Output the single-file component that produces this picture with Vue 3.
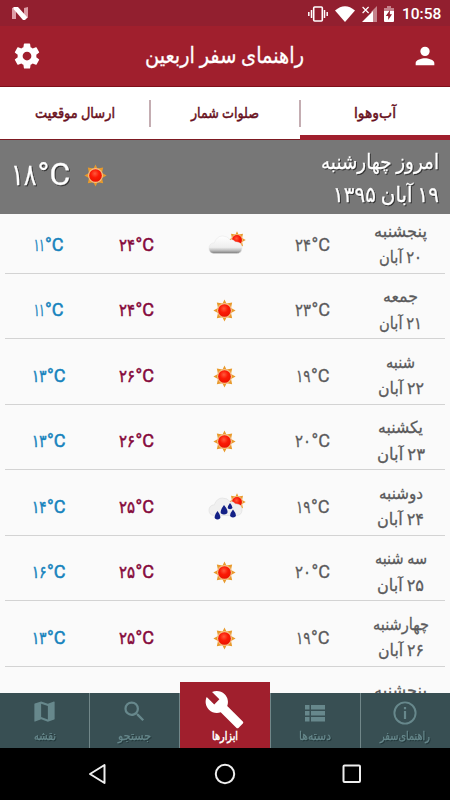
<script setup>
import { h } from 'vue'

// Single line of text fitted to a fixed width
const Txt = (p) =>
  h('svg', { class: 'txt', width: p.w, height: p.s, viewBox: `0 0 ${p.w} ${p.s}` }, [
    h('text', {
      x: p.w,
      y: p.s * 0.8,
      'font-size': p.s,
      direction: 'rtl',
      textLength: p.w,
      lengthAdjust: 'spacingAndGlyphs',
    }, p.t),
  ])
Txt.props = { t: String, w: Number, s: Number }

// Temperature: Persian digits followed by the unit, sized relative to a 17.5px line
const Temp = (p) => {
  const dw = p.v === '۱۱' ? 11 : p.v[0] === '۱' ? 15 : 16.5
  const w = dw + 18.5
  const k = p.s / 17.5
  return h('svg', { class: 'txt', width: w * k, height: p.s, viewBox: `0 0 ${w} 17.5` }, [
    h('text', { x: 0, y: 14, 'font-size': 17, textLength: dw - 0.5, lengthAdjust: 'spacingAndGlyphs' }, p.v),
    h('text', { x: dw, y: 14, 'font-size': 17.5, textLength: 18.5, lengthAdjust: 'spacingAndGlyphs' }, '°C'),
  ])
}
Temp.props = { v: String, s: { type: Number, default: 17.5 } }

const tabs = [
  { t: 'آب‌وهوا', w: 42, on: true },
  { t: 'صلوات شمار', w: 68 },
  { t: 'ارسال موقعیت', w: 80 },
]
const days = [
  { d: 'پنجشنبه', dw: 53, n: '۲۰ آبان', nw: 43, now: '۲۴', hi: '۲۴', lo: '۱۱', icon: 'cloud' },
  { d: 'جمعه', dw: 35, n: '۲۱ آبان', nw: 43, now: '۲۳', hi: '۲۴', lo: '۱۱', icon: 'sun' },
  { d: 'شنبه', dw: 29, n: '۲۲ آبان', nw: 46, now: '۱۹', hi: '۲۶', lo: '۱۳', icon: 'sun' },
  { d: 'یکشنبه', dw: 45, n: '۲۳ آبان', nw: 48, now: '۲۰', hi: '۲۶', lo: '۱۳', icon: 'sun' },
  { d: 'دوشنبه', dw: 44, n: '۲۴ آبان', nw: 47, now: '۱۹', hi: '۲۵', lo: '۱۴', icon: 'rain' },
  { d: 'سه شنبه', dw: 52, n: '۲۵ آبان', nw: 47, now: '۲۰', hi: '۲۵', lo: '۱۶', icon: 'sun' },
  { d: 'چهارشنبه', dw: 56, n: '۲۶ آبان', nw: 46, now: '۱۹', hi: '۲۵', lo: '۱۳', icon: 'sun' },
  { d: 'پنجشنبه', dw: 53 },
]
const nav = [
  { t: 'راهنمای‌سفر', w: 50, icon: 'info' },
  { t: 'دسته‌ها', w: 32, icon: 'list' },
  { t: 'ابزارها', w: 26, icon: 'tool', on: true },
  { t: 'جستجو', w: 33, icon: 'search' },
  { t: 'نقشه', w: 22, icon: 'map' },
]
</script>

<template>
  <div class="screen">
    <svg class="defs" width="0" height="0">
      <defs>
        <radialGradient id="core" cx=".45" cy=".35" r=".65">
          <stop offset="0" stop-color="#ff5a3c" /><stop offset=".5" stop-color="#fb1a05" /><stop offset="1" stop-color="#e81400" />
        </radialGradient>
        <linearGradient id="puff" x1="0" y1="0" x2="0" y2="1">
          <stop offset="0" stop-color="#ffffff" /><stop offset=".65" stop-color="#eeeeee" /><stop offset=".85" stop-color="#b5b5b5" /><stop offset="1" stop-color="#777777" />
        </linearGradient>
        <symbol id="sun" viewBox="0 0 24 24">
          <path fill="#e89a2c" d="M12 .4l2 4.400 6-1.100-1.200 5.600 4.800 2.700-4.800 2.700L20 20.200l-5.800-1.100L12 23.600l-2.200-4.500L4 20.200l1.200-5.500L.4 12l4.800-2.700L4 3.700l6 1.100z" />
          <circle cx="12" cy="12" r="7.800" fill="#f6bd83" />
          <circle cx="12" cy="12" r="6.600" fill="url(#core)" />
        </symbol>
        <symbol id="puffy" viewBox="0 0 36 20">
          <path fill="url(#puff)" stroke="#e6e6e6" stroke-width=".5" d="M6 19Q1 18.500 1 13.500Q1.200 8.500 6.500 8Q9 1 15 1Q20 1 23 5Q26 4 28 7Q35 7 35 13.500Q34.500 19 29 19Z" />
        </symbol>
        <symbol id="puffy-light" viewBox="0 0 36 20">
          <path fill="#f0f0f0" stroke="#dcdcdc" stroke-width=".6" d="M6 19Q1 18.500 1 13.500Q1.200 8.500 6.500 8Q9 1 15 1Q20 1 23 5Q26 4 28 7Q35 7 35 13.500Q34.500 19 29 19Z" />
        </symbol>
      </defs>
    </svg>

    <div class="status">
      <svg class="nlogo" width="16" height="13" viewBox="0 0 16 13">
        <path fill="#dc9da6" d="M0 1l4-1v12H0zM12 1l4-1v10.500l-4 1.500z" /><path fill="#fff" d="M1.500 0H6l9.500 10.500-2.500 2.500h-2L1.500 2z" />
      </svg>
      <div class="signals">
        <svg width="20" height="16" viewBox="0 0 20 16" fill="none" stroke="#fff">
          <rect x="5.700" y="1" width="8.600" height="14" rx="1" stroke-width="1.600" />
          <path stroke-width="1.500" d="M3.500 4v8M16.500 4v8M.8 6v4M19.200 6v4" />
        </svg>
        <svg width="20" height="16" viewBox="0 0 20 16"><path fill="#fff" d="M0 4.500Q10-4 20 4.500L10 16z" /></svg>
        <svg width="15" height="16" viewBox="0 0 15 16">
          <path fill="#c5838c" d="M9.500 5.500L15 0v16H9.500z" /><path fill="#fff" d="M0 16L11 5v11z" /><path stroke="#fff" stroke-width="1.200" d="M.6 1l6 6M6.600 1l-6 6" />
        </svg>
        <svg width="10" height="16" viewBox="0 0 10 16">
          <path fill="#c5838c" d="M3 0h4v2h3v5H0V2h3z" /><path fill="#fff" d="M0 5h10v10q0 1-1 1H1q-1 0-1-1z" /><path fill="#921f2f" d="M6 4L1.800 10h2.400v4L8 8.300H5.800z" />
        </svg>
      </div>
      <span class="clock">10:58</span>
    </div>

    <header class="bar">
      <svg width="30" height="30" viewBox="0 0 24 24" fill="#fff"><path d="M19.430 12.980c.04-.32.070-.64.070-.98s-.03-.66-.07-.98l2.110-1.650c.19-.15.24-.42.12-.64l-2-3.460c-.12-.22-.39-.3-.61-.22l-2.490 1c-.52-.4-1.080-.73-1.690-.98l-.38-2.650A.488.488 0 0 0 14 2h-4c-.25 0-.46.18-.49.42l-.38 2.650c-.61.25-1.170.59-1.690.98l-2.490-1c-.23-.09-.49 0-.61.22l-2 3.460c-.13.22-.07.49.12.64l2.110 1.650c-.04.32-.07.65-.07.98s.03.66.07.98l-2.110 1.650c-.19.15-.24.42-.12.64l2 3.460c.12.22.39.3.61.22l2.490-1c.52.4 1.080.73 1.690.98l.38 2.650c.03.24.24.42.49.42h4c.25 0 .46-.18.49-.42l.38-2.650c.61-.25 1.170-.59 1.690-.98l2.490 1c.23.09.49 0 .61-.22l2-3.460c.12-.22.070-.49-.12-.64zM12 15.500a3.500 3.500 0 1 1 0-7 3.500 3.500 0 0 1 0 7z" /></svg>
      <Txt class="title" t="راهنمای سفر اربعین" :w="159" :s="22" />
      <svg width="28" height="28" viewBox="0 0 24 24" fill="#fff"><path d="M12 12a4 4 0 1 0 0-8 4 4 0 0 0 0 8zm0 2c-2.670 0-8 1.340-8 4v2h16v-2c0-2.660-5.330-4-8-4z" /></svg>
    </header>

    <nav class="tabs">
      <div v-for="t in tabs" :key="t.t" class="tab" :class="{ on: t.on }"><Txt :t="t.t" :w="t.w" :s="15" /></div>
    </nav>

    <section class="today">
      <div class="date">
        <Txt t="امروز چهارشنبه" :w="118" :s="21" />
        <Txt t="۱۹ آبان ۱۳۹۵" :w="106" :s="21" />
      </div>
      <svg class="sun" width="23" height="23"><use href="#sun" /></svg>
      <Temp class="big" v="۱۸" :s="31" />
    </section>

    <main class="list">
      <div v-for="(r, i) in days" :key="i" class="row">
        <div class="day"><Txt :t="r.d" :w="r.dw" :s="16.5" /><Txt v-if="r.n" :t="r.n" :w="r.nw" :s="16.5" /></div>
        <template v-if="r.n">
          <Temp :v="r.now" />
          <svg v-if="r.icon === 'sun'" width="23" height="23"><use href="#sun" /></svg>
          <svg v-else class="cloud" width="38" height="30" viewBox="0 0 38 30">
            <use href="#sun" x="20" y="1" width="18" height="18" />
            <use :href="r.icon === 'rain' ? '#puffy-light' : '#puffy'" x="0" y="5" width="35" height="19.500" />
            <path v-if="r.icon === 'rain'" fill="#132086" d="M16 13q5 6 3 8.500-3 2-6 0-1.500-2.500 3-8.500zM22 11q3.500 4 2 5.500-2 1.500-4 0-1-1.500 2-5.500zM9.500 19q4 5 2.500 7.500-2.500 2-5 0-1.500-2.500 2.500-7.500zM25 17.500q4 5 2.500 7-2.500 2-5 0-1.500-2 2.500-7z" />
          </svg>
          <Temp class="hi" :v="r.hi" />
          <Temp class="lo" :v="r.lo" />
        </template>
      </div>
    </main>

    <nav class="bottom">
      <div v-for="n in nav" :key="n.icon" class="item" :class="{ on: n.on }">
        <svg v-if="n.icon === 'info'" width="24" height="24" viewBox="0 0 24 24"><circle cx="12" cy="12" r="10.600" fill="none" stroke="currentColor" stroke-width="1.900" /><path fill="currentColor" d="M10.900 6h2.200v2.200h-2.200zM10.900 10h2.200v8h-2.200z" /></svg>
        <svg v-else-if="n.icon === 'list'" width="24" height="24" viewBox="0 0 24 24"><path fill="currentColor" d="M2 4h4.500v4.600H2zM8 4h14v4.600H8zM2 10h4.500v4.600H2zM8 10h14v4.600H8zM2 16h4.500v4.600H2zM8 16h14v4.600H8z" /></svg>
        <svg v-else-if="n.icon === 'tool'" width="41" height="41" viewBox="0 0 24 24"><path fill="currentColor" d="M22.700 19l-9.100-9.100c.9-2.300.4-5-1.500-6.900-2-2-5-2.400-7.400-1.300L9 6 6 9 1.600 4.700C.4 7.100.9 10.100 2.900 12.100c1.900 1.900 4.600 2.400 6.900 1.500l9.100 9.100c.4.4 1 .4 1.400 0l2.300-2.300c.5-.4.5-1.100.1-1.400z" /></svg>
        <svg v-else-if="n.icon === 'search'" width="27" height="27" viewBox="0 0 24 24"><path fill="currentColor" d="M15.500 14h-.79l-.28-.27A6.471 6.471 0 0 0 16 9.500 6.500 6.500 0 1 0 9.500 16c1.610 0 3.090-.59 4.230-1.570l.27.28v.79l5 4.990L20.490 19l-4.990-5zm-6 0a4.500 4.500 0 1 1 0-9 4.500 4.500 0 0 1 0 9z" /></svg>
        <svg v-else width="27" height="27" viewBox="0 0 24 24"><path fill="currentColor" d="M20.500 3l-.16.03L15 5.100 9 3 3.360 4.900c-.21.070-.36.25-.36.48V20.500c0 .28.22.5.5.5l.16-.03L9 18.900l6 2.100 5.640-1.900c.21-.07.36-.25.36-.48V3.500c0-.28-.22-.5-.5-.5zM15 19l-6-2.110V5l6 2.110V19z" /></svg>
        <Txt :t="n.t" :w="n.w" :s="12" />
      </div>
    </nav>

    <footer class="system">
      <svg width="20" height="22" viewBox="0 0 20 22"><path d="M16.500 2v18L2 11z" /></svg>
      <svg width="22" height="22" viewBox="0 0 22 22"><circle cx="11" cy="11" r="9.200" /></svg>
      <svg width="20" height="20" viewBox="0 0 20 20"><rect x="1.500" y="1.500" width="16.500" height="16.500" rx="1" /></svg>
    </footer>
  </div>
</template>

<style>
body { margin: 0; background: #000; }
</style>

<style scoped>
.screen { width: 450px; height: 800px; display: flex; flex-direction: column; overflow: hidden; background: #fafafa; font-family: Roboto, "DejaVu Sans", sans-serif; }
.screen svg { display: block; flex: none; }
.screen .txt { overflow: visible; direction: ltr; fill: currentColor; stroke: currentColor; stroke-width: .3px; }
.defs { height: 0; }
.status { box-sizing: border-box; flex: none; height: 26px; background: #921f2f; display: flex; align-items: center; padding: 0 8px 0 12px; color: #fff; }
.nlogo { margin-top: 1px; }
.signals { display: flex; gap: 7px; margin-left: auto; padding-top: 1px; }
.clock { width: 40px; margin-left: 8px; font-size: 15.500px; font-weight: 500; line-height: 26px; padding-top: 2px; white-space: nowrap; }
.bar { box-sizing: border-box; flex: none; height: 61px; background: #a01f2d; border-bottom: 1px solid #7f0f1a; display: flex; align-items: center; justify-content: space-between; padding: 0 11px 0 12px; color: #fff; }
.title { margin: 0 4px 0 0; }
.tabs { box-sizing: border-box; flex: none; height: 53px; direction: rtl; display: flex; background: #fff; border-bottom: 1px solid #7d1a22; color: #681020; }
.tabs .txt { stroke-width: .5px; }
.tab { box-sizing: border-box; width: 150px; height: 53px; display: flex; align-items: center; justify-content: center; position: relative; padding-bottom: 1px; }
.tab + .tab::before { content: ""; position: absolute; right: -1px; top: 13px; width: 2px; height: 27px; background: #c4adb2; }
.tab.on { border-bottom: 5px solid #a01f2d; padding-top: 5px; }
.today { box-sizing: border-box; flex: none; height: 73.500px; direction: rtl; background: #777; color: #fff; display: flex; padding: 0 11px; }
.date { display: flex; flex-direction: column; gap: 12px; padding-top: 12px; }
.today .txt { filter: drop-shadow(1px 1px 0 #333); }
.today .sun { margin: 24px auto 0 14px; }
.today .big { margin-top: 20px; stroke-width: .15px; }
.list { flex: 1; min-height: 0; overflow: hidden; display: flex; flex-direction: column; padding: 0 5px; color: #5a5a5c; }
.row { box-sizing: border-box; flex: none; height: 65.500px; direction: rtl; display: grid; grid-template-columns: repeat(5, 88px); align-items: center; justify-items: center; padding-top: 10px; border-bottom: 1.500px solid #d3d3d3; }
.row > svg { margin-right: 1px; }
.row > .cloud { margin-right: -3px; }
.row:first-child { margin-top: -5.500px; }
.row:last-child { align-items: start; padding-top: 16px; }
.day { display: flex; flex-direction: column; align-items: center; gap: 10px; margin-right: 1px; }
.hi { color: #85093b; }
.lo { color: #1683bd; }
.row .hi, .row .lo { stroke-width: .5px; }
.row > .lo { margin-right: 0; }
.bottom { flex: none; height: 55.500px; direction: rtl; display: flex; align-items: flex-end; background: #384f53; }
.item { box-sizing: border-box; width: 90px; height: 55.500px; display: flex; flex-direction: column; align-items: center; justify-content: flex-end; color: #67888c; padding: 0 1px 6px 0; border-left: 1px solid #718789; }
.item:nth-child(n + 4) { border-left: 0; border-right: 1px solid #718789; padding: 0 0 6px; }
.item .txt { filter: drop-shadow(1px 1px 0 #253a3d); margin-top: 4.500px; }
.item svg:not(.txt) { margin-bottom: 1px; }
.item.on { height: 66px; background: #a01f2d; color: #fff; border-left-color: #a01f2d; padding-right: 2px; padding-left: 0; }
.item.on svg:not(.txt) { margin-bottom: 0; margin-left: -1px; }
.item.on .txt { margin-top: 0; filter: none; stroke-width: .5px; }
.system { box-sizing: border-box; flex: none; height: 52px; background: #000; display: flex; align-items: center; justify-content: space-between; padding: 0 88px 0 88px; }
.system svg { fill: none; stroke: #eee; stroke-width: 2; stroke-linejoin: round; }
</style>
